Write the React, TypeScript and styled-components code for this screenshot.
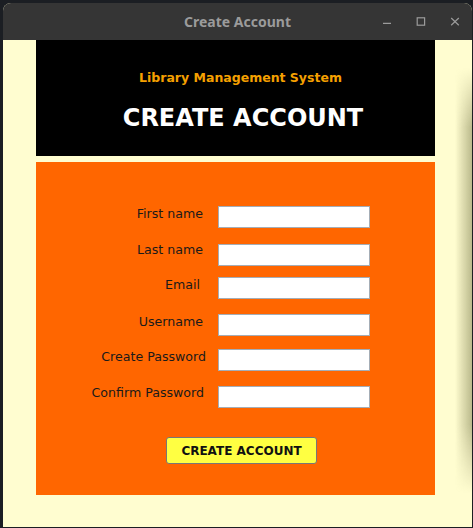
import React from "react";
import styled, { createGlobalStyle } from "styled-components";

const Global = createGlobalStyle`
  html, body { margin: 0; padding: 0; background: #1b1e23; }
  body { width: 473px; height: 528px; overflow: hidden; }
  * { box-sizing: border-box; }
`;

const Window = styled.div`
  margin: 3px 0 0 3px;
  width: 469px;
  height: 524px;
  border-radius: 8px 8px 0 0;
  overflow: hidden;
  display: flex;
  flex-direction: column;
  background: #fffdd0;
`;

const TitleBar = styled.div`
  height: 37px;
  flex: 0 0 37px;
  background: #353535;
  display: flex;
  align-items: center;
  justify-content: center;
  position: relative;
  font-family: "Noto Sans", "DejaVu Sans", sans-serif;
  font-weight: 700;
  font-size: 14px;
  color: #9b9b9b;
`;

const Controls = styled.div`
  position: absolute;
  right: 12px;
  top: 14px;
  display: flex;
  gap: 24px;
  align-items: center;
`;

const Content = styled.div`
  position: relative;
  flex: 1;
  padding: 0 0 0 33px;
  display: flex;
  flex-direction: column;
`;

const Shadow = styled.div`
  position: absolute;
  right: 0;
  top: 28px;
  bottom: 34px;
  width: 17px;
  background: linear-gradient(to right, rgba(170, 170, 120, 0), rgba(130, 130, 85, 0.55));
  -webkit-mask-image: linear-gradient(to bottom, transparent, #000 14%, #000 84%, transparent);
  mask-image: linear-gradient(to bottom, transparent, #000 14%, #000 84%, transparent);
`;

const Header = styled.div`
  width: 399px;
  height: 116px;
  background: #000;
  display: flex;
  flex-direction: column;
  align-items: center;
  padding-top: 30px;
  font-family: "DejaVu Sans", sans-serif;
  font-weight: 700;
`;

const Subtitle = styled.div`
  font-size: 12.5px;
  line-height: 15px;
  color: #f5a000;
  margin-left: 10px;
`;

const Title = styled.div`
  margin-top: 19px;
  font-size: 24px;
  line-height: 28px;
  color: #fff;
  margin-left: 15px;
`;

const Panel = styled.div`
  margin-top: 6px;
  width: 399px;
  height: 333px;
  background: #ff6600;
  padding-top: 44px;
  display: flex;
  flex-direction: column;
  font-family: "DejaVu Sans", sans-serif;
`;

const Row = styled.div<{ $top: number }>`
  display: grid;
  grid-template-columns: 167px 152px;
  column-gap: 15px;
  margin-top: ${(p) => p.$top}px;
`;

const Label = styled.label<{ $dx: number; $dy: number }>`
  justify-self: end;
  font-size: 12.6px;
  line-height: 15px;
  color: #1a1a1a;
  margin-right: ${(p) => -p.$dx}px;
  margin-top: ${(p) => p.$dy}px;
  white-space: nowrap;
`;

const Field = styled.input`
  width: 152px;
  height: 22px;
  border: 1px solid #a4adb6;
  background: #fff;
  padding: 0 4px;
  font-family: "DejaVu Sans", sans-serif;
  font-size: 12px;
  outline: none;
`;

const Submit = styled.button`
  margin: 29px 0 0 130px;
  width: 151px;
  height: 27px;
  background: #ffff42;
  border: 1px solid #777;
  border-radius: 3px;
  font-family: "DejaVu Sans", sans-serif;
  font-weight: 700;
  font-size: 12px;
  color: #111;
  padding: 1px 0 0;
  cursor: pointer;
`;

const rows = [
  { label: "First name", top: 0, dx: 0, dy: 0 },
  { label: "Last name", top: 16, dx: 0, dy: -2 },
  { label: "Email", top: 11, dx: -3, dy: 0 },
  { label: "Username", top: 15, dx: 0, dy: 0 },
  { label: "Create Password", top: 13, dx: 3, dy: 0 },
  { label: "Confirm Password", top: 15, dx: 1, dy: -1 },
];

const Icon = ({ children }: { children: React.ReactNode }) => (
  <svg width="10" height="10" viewBox="0 0 10 10" fill="none" stroke="#9b9b9b" strokeWidth="1.2">
    {children}
  </svg>
);

export default function App() {
  return (
    <>
      <Global />
      <Window>
        <TitleBar>
          Create Account
          <Controls>
            <Icon>
              <line x1="1" y1="6.4" x2="9" y2="6.4" />
            </Icon>
            <Icon>
              <rect x="1.2" y="0.8" width="7.4" height="7.4" />
            </Icon>
            <Icon>
              <line x1="1.2" y1="1" x2="8.8" y2="8.2" />
              <line x1="8.8" y1="1" x2="1.2" y2="8.2" />
            </Icon>
          </Controls>
        </TitleBar>
        <Content>
          <Header>
            <Subtitle>Library Management System</Subtitle>
            <Title>CREATE ACCOUNT</Title>
          </Header>
          <Panel>
            {rows.map((r) => (
              <Row key={r.label} $top={r.top}>
                <Label $dx={r.dx} $dy={r.dy}>{r.label}</Label>
                <Field type={r.label.includes("Password") ? "password" : "text"} />
              </Row>
            ))}
            <Submit type="button">CREATE ACCOUNT</Submit>
          </Panel>
          <Shadow />
        </Content>
      </Window>
    </>
  );
}
